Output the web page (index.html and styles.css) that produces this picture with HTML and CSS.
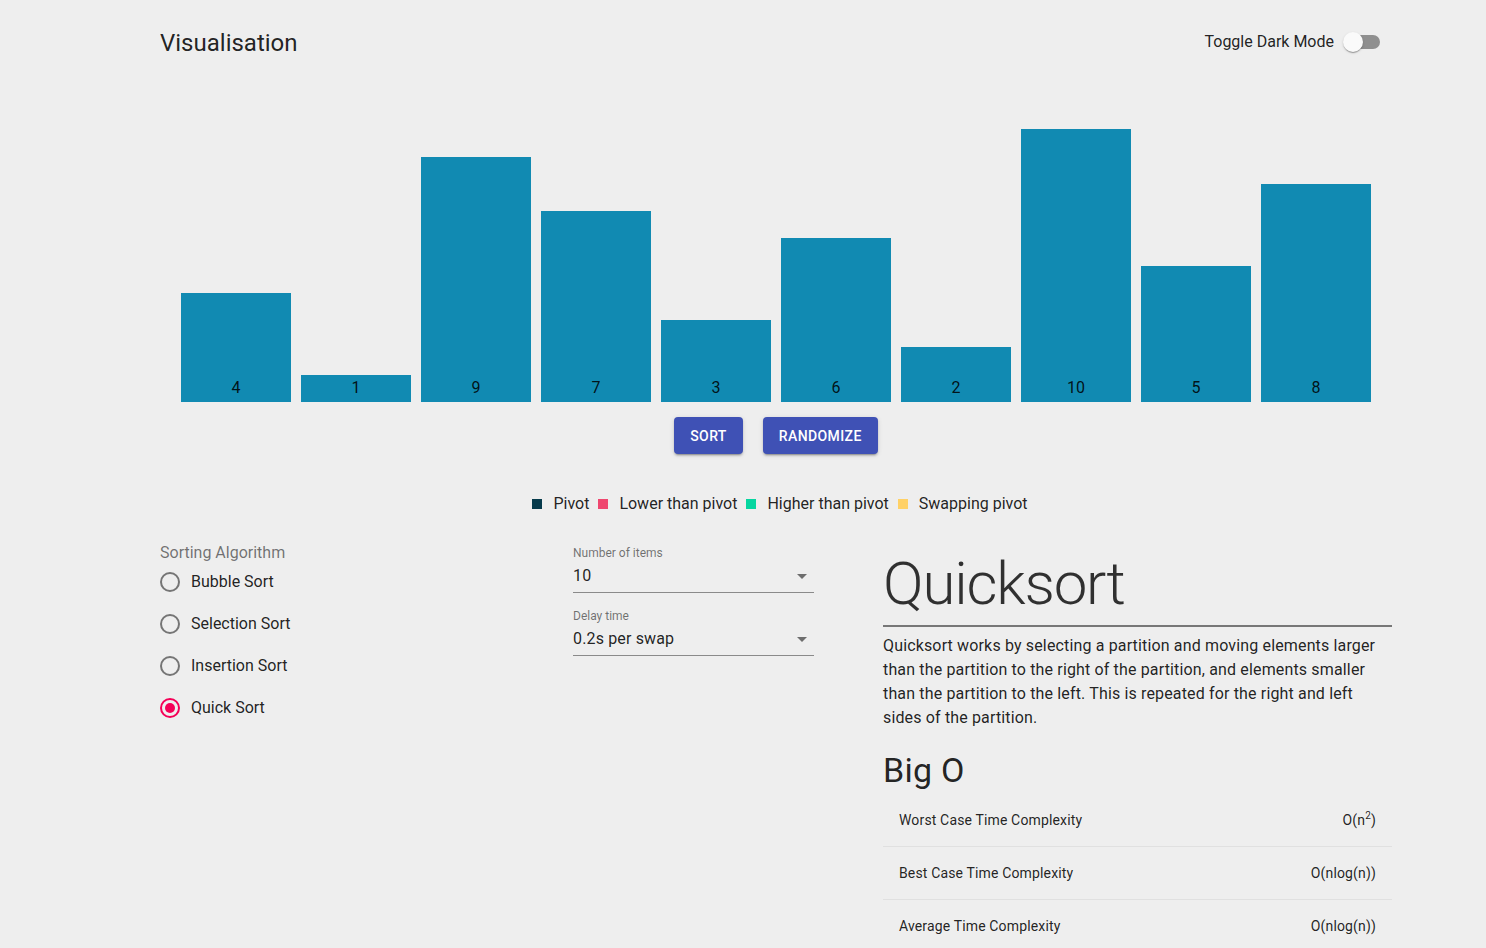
FILE: index.html
```html
<!DOCTYPE html>
<html>
<head>
<meta charset="utf-8">
<link rel="stylesheet" href="styles.css">
</head>
<body>
<div class="page">
  <header class="header">
    <h1 class="title">Visualisation</h1>
    <div class="toggle">
      <span class="toggle-label">Toggle Dark Mode</span>
      <span class="switch"><span class="track"></span><span class="thumb"></span></span>
    </div>
  </header>

  <div class="chart">
    <div class="bar" style="height:109px"><span>4</span></div>
    <div class="bar" style="height:27px"><span>1</span></div>
    <div class="bar" style="height:245px"><span>9</span></div>
    <div class="bar" style="height:191px"><span>7</span></div>
    <div class="bar" style="height:82px"><span>3</span></div>
    <div class="bar" style="height:164px"><span>6</span></div>
    <div class="bar" style="height:55px"><span>2</span></div>
    <div class="bar" style="height:273px"><span>10</span></div>
    <div class="bar" style="height:136px"><span>5</span></div>
    <div class="bar" style="height:218px"><span>8</span></div>
  </div>

  <div class="actions">
    <button class="btn">Sort</button>
    <button class="btn">Randomize</button>
  </div>

  <div class="legend">
    <span class="sq sq-pivot"></span><span class="lg-text">Pivot</span>
    <span class="sq sq-lower"></span><span class="lg-text">Lower than pivot</span>
    <span class="sq sq-higher"></span><span class="lg-text">Higher than pivot</span>
    <span class="sq sq-swap"></span><span class="lg-text">Swapping pivot</span>
  </div>

  <div class="bottom">
    <div class="algo">
      <div class="algo-label">Sorting Algorithm</div>
      <div class="radios">
        <div class="radio-row"><span class="radio"></span><span class="radio-text">Bubble Sort</span></div>
        <div class="radio-row"><span class="radio"></span><span class="radio-text">Selection Sort</span></div>
        <div class="radio-row"><span class="radio"></span><span class="radio-text">Insertion Sort</span></div>
        <div class="radio-row"><span class="radio checked"></span><span class="radio-text">Quick Sort</span></div>
      </div>
    </div>

    <div class="controls">
      <div class="field">
        <div class="field-label">Number of items</div>
        <div class="field-input"><span>10</span><span class="caret"></span></div>
      </div>
      <div class="field">
        <div class="field-label">Delay time</div>
        <div class="field-input"><span>0.2s per swap</span><span class="caret"></span></div>
      </div>
    </div>

    <div class="info">
      <h2 class="algo-title">Quicksort</h2>
      <div class="rule"></div>
      <p class="desc">Quicksort works by selecting a partition and moving elements larger than the partition to the right of the partition, and elements smaller than the partition to the left. This is repeated for the right and left sides of the partition.</p>
      <h3 class="bigo">Big O</h3>
      <div class="table">
        <div class="row"><span>Worst Case Time Complexity</span><span>O(n<sup>2</sup>)</span></div>
        <div class="row"><span>Best Case Time Complexity</span><span>O(nlog(n))</span></div>
        <div class="row"><span>Average Time Complexity</span><span>O(nlog(n))</span></div>
      </div>
    </div>
  </div>
</div>
</body>
</html>
```

FILE: styles.css
```css
* { box-sizing: border-box; }
html, body {
  margin: 0;
  padding: 0;
  background: #eeeeee;
  font-family: Roboto, "Liberation Sans", sans-serif;
  color: rgba(0, 0, 0, 0.87);
}
.page {
  width: 1232px;
  margin-left: 160px;
}
.header {
  height: 84px;
  display: flex;
  align-items: center;
  justify-content: space-between;
}
.title {
  margin: 0;
  font-size: 24px;
  font-weight: 400;
  line-height: 32px;
  padding-top: 2px;
}
.toggle {
  display: flex;
  align-items: center;
}
.toggle-label {
  font-size: 16px;
  line-height: 24px;
}
.switch {
  position: relative;
  width: 58px;
  height: 38px;
}
.track {
  position: absolute;
  left: 12px;
  top: 12px;
  width: 34px;
  height: 14px;
  border-radius: 7px;
  background: #8f8f8f;
}
.thumb {
  position: absolute;
  left: 9px;
  top: 9px;
  width: 20px;
  height: 20px;
  border-radius: 50%;
  background: #fafafa;
  box-shadow: 0 2px 1px -1px rgba(0,0,0,0.2), 0 1px 1px 0 rgba(0,0,0,0.14), 0 1px 3px 0 rgba(0,0,0,0.12);
}
.chart {
  height: 318px;
  display: flex;
  align-items: flex-end;
  justify-content: center;
  gap: 10px;
}
.bar {
  width: 110px;
  background: #118ab2;
  display: flex;
  align-items: flex-end;
  justify-content: center;
}
.bar span {
  font-size: 16px;
  line-height: 24px;
  padding-bottom: 2px;
  color: rgba(0,0,0,0.87);
}
.actions {
  display: flex;
  justify-content: center;
  gap: 20px;
  margin-top: 15px;
}
.btn {
  height: 37px;
  padding: 0 16px;
  border: 0;
  border-radius: 4px;
  background: #3f51b5;
  color: #fff;
  font-family: Roboto, "Liberation Sans", sans-serif;
  font-size: 14px;
  font-weight: 500;
  letter-spacing: 0.4px;
  text-transform: uppercase;
  box-shadow: 0 3px 1px -2px rgba(0,0,0,0.2), 0 2px 2px 0 rgba(0,0,0,0.14), 0 1px 5px 0 rgba(0,0,0,0.12);
}
.legend {
  margin-top: 38px;
  height: 24px;
  display: flex;
  justify-content: center;
  align-items: center;
  font-size: 16px;
  line-height: 24px;
  padding-left: 17px;
}
.sq {
  width: 10px;
  height: 10px;
  margin-right: 11px;
}
.lg-text { margin-right: 9px; }
.sq-pivot { background: #073b4c; }
.sq-lower { background: #ef476f; }
.sq-higher { background: #06d6a0; }
.sq-swap { background: #ffd166; }

.bottom {
  margin-top: 25px;
  display: grid;
  grid-template-columns: 413px 310px 509px;
}
.algo-label {
  font-size: 16px;
  line-height: 24px;
  color: rgba(0,0,0,0.54);
}
.radios { margin-top: -4px; }
.radio-row {
  height: 42px;
  display: flex;
  align-items: center;
}
.radio {
  width: 20px;
  height: 20px;
  border: 2px solid #757575;
  border-radius: 50%;
  margin-right: 11px;
  display: flex;
  align-items: center;
  justify-content: center;
}
.radio.checked { border-color: #f50057; }
.radio.checked::after {
  content: "";
  width: 10px;
  height: 10px;
  border-radius: 50%;
  background: #f50057;
}
.radio-text {
  font-size: 16px;
  line-height: 24px;
}
.controls { padding-top: 4px; }
.field { width: 241px; margin-bottom: 15px; }
.field-label {
  font-size: 12px;
  line-height: 16px;
  color: rgba(0,0,0,0.54);
  margin-bottom: 3px;
}
.field-input {
  height: 29px;
  padding-bottom: 4px;
  border-bottom: 1px solid rgba(0,0,0,0.42);
  display: flex;
  justify-content: space-between;
  align-items: center;
  font-size: 16px;
  line-height: 24px;
  letter-spacing: 0.15px;
}
.caret {
  width: 0;
  height: 0;
  border-left: 5px solid transparent;
  border-right: 5px solid transparent;
  border-top: 5px solid rgba(0,0,0,0.54);
  margin-right: 7px;
}
.algo-title {
  margin: 7px 0 0;
  font-family: "Roboto Light", Roboto, "Liberation Sans", sans-serif;
  font-size: 60px;
  font-weight: 300;
  line-height: 72px;
  letter-spacing: -1.2px;
  color: rgba(0,0,0,0.8);
}
.rule {
  height: 2px;
  background: #777;
  margin-top: 5px;
}
.desc {
  margin: 7px 0 0;
  font-size: 16px;
  line-height: 24px;
  letter-spacing: 0.15px;
}
.bigo {
  margin: 19px 0 0;
  font-size: 34px;
  font-weight: 400;
  line-height: 42px;
  letter-spacing: 0.25px;
}
.table { margin-top: 3px; }
.row {
  height: 53px;
  display: flex;
  justify-content: space-between;
  align-items: center;
  padding: 0 16px;
  font-size: 14px;
  line-height: 20px;
  letter-spacing: 0.15px;
  border-bottom: 1px solid #e0e0e0;
}
.row sup { font-size: 10px; line-height: 0; }
```
